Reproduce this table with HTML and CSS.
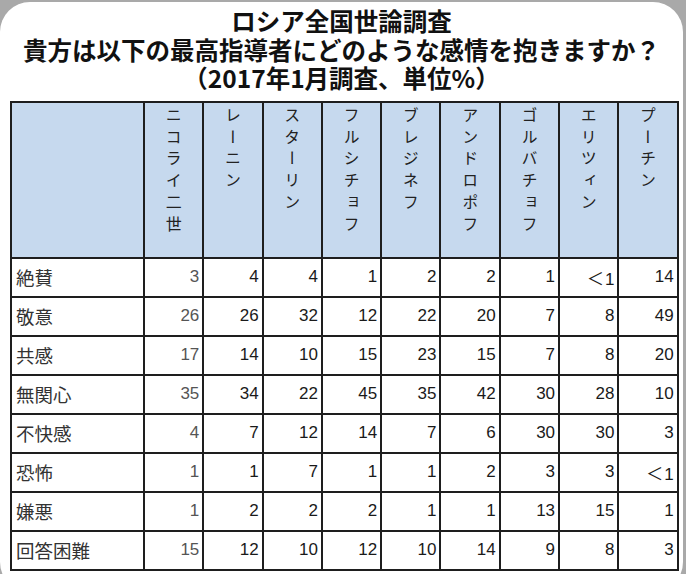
FILE: index.html
```html
<!DOCTYPE html>
<html lang="ja">
<head>
<meta charset="utf-8">
<link rel="stylesheet" href="styles.css">
</head>
<body>
<div class="card">
  <h1 class="title">
    <span class="line">ロシア全国世論調査</span>
    <span class="line">貴方は以下の最高指導者にどのような感情を抱きますか？</span>
    <span class="line">（2017年1月調査、単位%）</span>
  </h1>
  <table class="grid">
    <colgroup>
      <col class="c-label">
      <col span="9" class="c-num">
    </colgroup>
    <thead>
      <tr>
        <th></th>
        <th><span class="vname">ニコライ二世</span></th>
        <th><span class="vname">レーニン</span></th>
        <th><span class="vname">スターリン</span></th>
        <th><span class="vname">フルシチョフ</span></th>
        <th><span class="vname">ブレジネフ</span></th>
        <th><span class="vname">アンドロポフ</span></th>
        <th><span class="vname">ゴルバチョフ</span></th>
        <th><span class="vname">エリツィン</span></th>
        <th><span class="vname">プーチン</span></th>
      </tr>
    </thead>
    <tbody>
      <tr><td>絶賛</td><td>3</td><td>4</td><td>4</td><td>1</td><td>2</td><td>2</td><td>1</td><td><span class="lt">＜</span>1</td><td>14</td></tr>
      <tr><td>敬意</td><td>26</td><td>26</td><td>32</td><td>12</td><td>22</td><td>20</td><td>7</td><td>8</td><td>49</td></tr>
      <tr><td>共感</td><td>17</td><td>14</td><td>10</td><td>15</td><td>23</td><td>15</td><td>7</td><td>8</td><td>20</td></tr>
      <tr><td>無関心</td><td>35</td><td>34</td><td>22</td><td>45</td><td>35</td><td>42</td><td>30</td><td>28</td><td>10</td></tr>
      <tr><td>不快感</td><td>4</td><td>7</td><td>12</td><td>14</td><td>7</td><td>6</td><td>30</td><td>30</td><td>3</td></tr>
      <tr><td>恐怖</td><td>1</td><td>1</td><td>7</td><td>1</td><td>1</td><td>2</td><td>3</td><td>3</td><td><span class="lt">＜</span>1</td></tr>
      <tr><td>嫌悪</td><td>1</td><td>2</td><td>2</td><td>2</td><td>1</td><td>1</td><td>13</td><td>15</td><td>1</td></tr>
      <tr><td>回答困難</td><td>15</td><td>12</td><td>10</td><td>12</td><td>10</td><td>14</td><td>9</td><td>8</td><td>3</td></tr>
    </tbody>
  </table>
</div>
</body>
</html>
```
FILE: styles.css
```css
html, body {
  margin: 0;
  padding: 0;
  background: #a9a9a9;
  overflow: hidden;
}

.card {
  margin-top: 2px;
  width: 683px;
  height: 590px;
  background: #ffffff;
  border-radius: 30px;
  padding-top: 5px;
  box-sizing: border-box;
}

.title {
  margin: 0;
  font-family: "Noto Sans CJK JP", "Noto Sans", sans-serif;
  font-weight: 700;
  font-size: 24.5px;
  line-height: 28.5px;
  color: #111;
  text-align: center;
}

.line {
  display: block;
  white-space: nowrap;
}

.grid {
  margin: 8px 0 0 10px;
  border-collapse: collapse;
  table-layout: fixed;
  width: 668px;
}

.c-label { width: 133px; }
.c-num { width: 59.3px; }

.grid th,
.grid td {
  border: 2px solid #1e1e1e;
  padding: 0;
}

.grid thead th {
  height: 154px;
  background: #c6d9ee;
  vertical-align: top;
  text-align: center;
  font-weight: 400;
}

.vname {
  display: inline-block;
  margin-top: 4px;
  writing-mode: vertical-rl;
  text-orientation: upright;
  font-family: "Noto Sans CJK JP", sans-serif;
  font-size: 16px;
  line-height: 1;
  letter-spacing: 5.7px;
  color: #222;
}

.grid tbody td {
  height: 37px;
  text-align: right;
  padding-right: 3px;
  font-family: "Liberation Sans", "Noto Sans CJK JP", Arial, sans-serif;
  font-size: 17px;
  color: #1a1a1a;
}

.lt {
  font-family: "Noto Sans CJK JP", sans-serif;
  font-size: 17px;
  margin-right: 1px;
}

.grid tbody td:first-child {
  text-align: left;
  padding: 0 0 0 4px;
  font-family: "Noto Sans CJK JP", sans-serif;
  font-size: 18.5px;
  color: #333;
}

.grid tbody td:nth-child(2) {
  color: #555;
}
```
